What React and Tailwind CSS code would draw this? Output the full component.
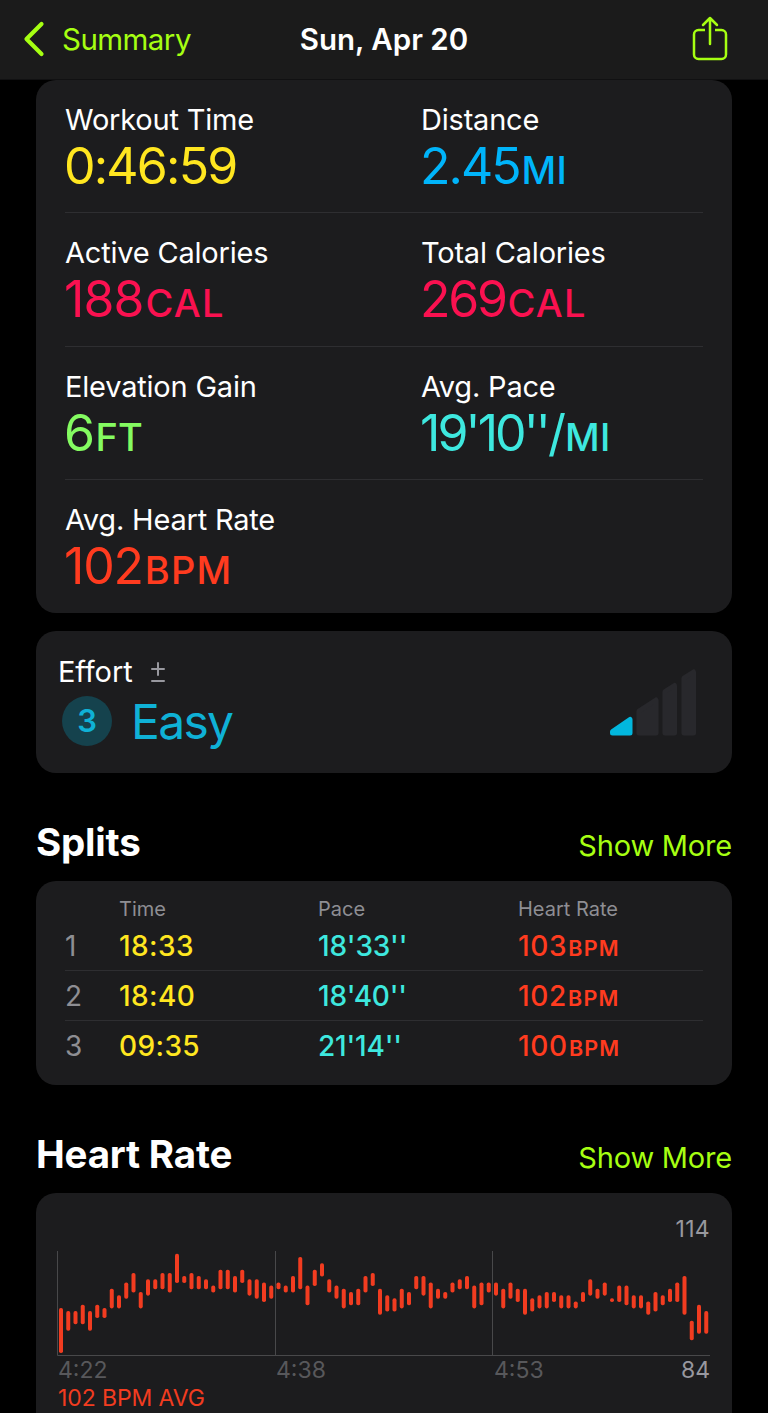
const metricRows = [
  [
    { label: "Workout Time", value: "0:46:59", unit: "", color: "text-[#ffe620]", spacing: "tracking-[-1.8px]" },
    { label: "Distance", value: "2.45", unit: "MI", color: "text-[#00b4fa]", spacing: "tracking-[-2px]", unitSpacing: "tracking-[0.2px]" },
  ],
  [
    { label: "Active Calories", value: "188", unit: "CAL", color: "text-[#fa1150]", spacing: "tracking-[-0.9px]", unitSpacing: "tracking-[1.2px]" },
    { label: "Total Calories", value: "269", unit: "CAL", color: "text-[#fa1150]", spacing: "tracking-[-2.3px]", unitSpacing: "tracking-[1.2px]" },
  ],
  [
    { label: "Elevation Gain", value: "6", unit: "FT", color: "text-[#84fb61]", spacing: "tracking-[-1.5px]", unitSpacing: "tracking-[0.2px]" },
    { label: "Avg. Pace", value: "19'10''/", unit: "MI", color: "text-[#3ee8df]", spacing: "tracking-[-2.9px]", unitSpacing: "tracking-[0.4px]" },
  ],
  [{ label: "Avg. Heart Rate", value: "102", unit: "BPM", color: "text-[#ff3b1f]", spacing: "tracking-[-1.2px]", unitSpacing: "tracking-[1.2px]" }],
];

const splits = [
  { id: 1, time: "18:33", pace: "18'33''", bpm: 103 },
  { id: 2, time: "18:40", pace: "18'40''", bpm: 102 },
  { id: 3, time: "09:35", pace: "21'14''", bpm: 100 },
];

// [high, low] of every sample, counted in bpm below the top of the chart
const samples = [
  [18, 32], [19, 25], [19, 23], [17, 23], [19, 25], [17, 21], [18, 21], [12, 18], [14, 18], [10, 15],
  [7, 13], [13, 18], [9, 14], [9, 12], [7, 12], [7, 13], [1, 10], [8, 10], [7, 12], [8, 12],
  [9, 12], [11, 13], [6, 12], [6, 12], [8, 13], [6, 10], [9, 14], [9, 15], [10, 16], [11, 15],
  [10, 12], [11, 13], [8, 13], [2, 12], [11, 17], [6, 11], [4, 8], [9, 13], [11, 15], [12, 18],
  [13, 17], [12, 17], [8, 13], [7, 11], [12, 20], [14, 19], [15, 19], [12, 18], [13, 17], [8, 12],
  [8, 14], [10, 18], [12, 15], [13, 15], [10, 13], [9, 12], [8, 12], [11, 18], [10, 17], [10, 13],
  [10, 14], [12, 18], [10, 15], [12, 16], [12, 20], [15, 19], [14, 18], [13, 18], [13, 16], [14, 18],
  [14, 18], [16, 18], [13, 16], [9, 14], [12, 15], [10, 14], [15, 16], [11, 16], [11, 17], [14, 18],
  [14, 18], [16, 20], [13, 19], [14, 17], [12, 16], [10, 16], [8, 20], [22, 28], [17, 26], [19, 26],
];

function Header() {
  return (
    <header className="grid h-20 grid-cols-[1fr_auto_1fr] items-center border-b border-[#111112] bg-[#1b1b1b] px-[23px] pb-px">
      <div className="flex items-center gap-[17px] text-[#a6ff12]">
        <svg width="22" height="36" viewBox="0 0 22 36" fill="none" stroke="currentColor" strokeWidth="4.2" strokeLinecap="round" strokeLinejoin="round">
          <path d="M18.500 3 3.500 18l15 15" />
        </svg>
        <span className="text-[29.5px] leading-9 tracking-[-0.55px]">Summary</span>
      </div>
      <h1 className="whitespace-nowrap text-center text-[29.5px] leading-9 font-semibold text-white">Sun, Apr 20</h1>
      <svg className="mr-[17px] justify-self-end text-[#a6ff12]" width="36" height="46" viewBox="0 0 36 46" fill="none" stroke="currentColor" strokeWidth="2.5" strokeLinecap="round" strokeLinejoin="round">
        <path d="M13 14H6.500a4.500 4.500 0 0 0-4.500 4.500v20A4.500 4.500 0 0 0 6.500 43h23a4.500 4.500 0 0 0 4.500-4.500v-20a4.500 4.500 0 0 0-4.500-4.500H23" strokeLinecap="butt" />
        <path d="M18 28V2.500M11 9l7-7 7 7" />
      </svg>
    </header>
  );
}

function Metric({ label, value, unit, color, spacing, unitSpacing }) {
  return (
    <div className="pt-[22px]">
      <p className="text-[29px] leading-9 tracking-[-0.2px] text-white">{label}</p>
      <p className={`-ml-px whitespace-nowrap text-[50px] leading-[57px] ${color}`}>
        <span className={spacing}>{value}</span>
        <span className={`ml-0.5 text-[38px] font-medium ${unitSpacing}`}>{unit}</span>
      </p>
    </div>
  );
}

function EffortCard() {
  return (
    <section className="mt-[18px] flex h-[142px] justify-between rounded-[20px] bg-[#1c1c1e] pl-[22px] pr-[35px]">
      <div className="pt-[23px]">
        <div className="flex items-center gap-[17px]">
          <span className="text-[29px] leading-9 tracking-[-0.1px] text-white">Effort</span>
          <svg width="16" height="22" viewBox="0 0 16 22" stroke="#98989f" strokeWidth="2" strokeLinecap="round">
            <path d="M2 8h12M8 2v12M2 20h12" />
          </svg>
        </div>
        <div className="flex items-center gap-[19px] pl-1 pt-px">
          <span className="flex size-[50px] items-center justify-center rounded-full bg-[#15424d] text-[31px] font-semibold text-[#0fb1d6]">3</span>
          <span className="pt-0.5 text-[48px] leading-[58px] tracking-[-1.7px] text-[#0fb1d6]">Easy</span>
        </div>
      </div>
      <svg className="mt-[37px]" width="88" height="70" viewBox="0 0 88 70" strokeWidth="5" strokeLinejoin="round">
        <path d="M3.500 65v-1.500L21 51.500V65Z" fill="#02b7de" stroke="#02b7de" />
        <g fill="#28282c" stroke="#28282c">
          <path d="M30 65V43L47 32v33Z" />
          <path d="M56 65V23.500L65.500 17.500V65Z" />
          <path d="M75 65V10L84.500 4v61Z" />
        </g>
      </svg>
    </section>
  );
}

function SectionTitle({ children }) {
  return (
    <div className="flex items-center justify-between">
      <h2 className="text-[38.5px] leading-[48px] font-bold tracking-[-0.2px] text-white">{children}</h2>
      <span className="pt-[7px] text-[29px] leading-9 tracking-[-0.2px] text-[#a6ff12]">Show More</span>
    </div>
  );
}

function SplitsCard() {
  return (
    <section className="mt-[15px] h-[204px] rounded-[20px] bg-[#1c1c1e] px-[29px] pt-[13px]">
      <div className="grid h-[27px] grid-cols-[54px_199px_200px_1fr] items-center pb-[5px] text-[20px] text-[#8e8e93]">
        <span />
        <span>Time</span>
        <span>Pace</span>
        <span>Heart Rate</span>
      </div>
      {splits.map((s) => (
        <div key={s.id} className="grid h-[50px] grid-cols-[54px_199px_200px_1fr] items-center border-b border-[#2e2e31] text-[28px] font-medium last:border-0">
          <span className="font-normal text-[#8e8e93]">{s.id}</span>
          <span className="tracking-[0.4px] text-[#ffe620]">{s.time}</span>
          <span className="tracking-[-0.2px] text-[#3ee8df]">{s.pace}</span>
          <span className="tracking-[0.7px] text-[#ff3b1f]">
            {s.bpm}
            <span className="ml-px text-[21.5px] font-semibold tracking-[1.2px]">BPM</span>
          </span>
        </div>
      ))}
    </section>
  );
}

function HeartRateCard() {
  return (
    <section className="mt-[15px] h-[240px] rounded-[20px] bg-[#1c1c1e] pl-[21px] pr-[21px] pt-[20px] text-[23px] leading-8">
      <p className="pr-px text-right tracking-[0.3px] text-[#98989f]">114</p>
      <svg className="mt-[5px] block" width="654" height="106" viewBox="0 0 654 106">
        <path d="M.5 1v104.500H653M218.500 1v104M435.500 1v104" fill="none" stroke="#48484a" />
        {samples.map(([high, low], i) => (
          <rect key={i} x={2 + i * 7.25} y={0.6 + high * 3.183} width="4" height={(low - high) * 3.183 + 0.5} rx="1.8" fill="#f23c20" />
        ))}
      </svg>
      <div className="flex h-[28px] items-center pl-px pr-px text-[#58585b]">
        <span className="w-[218px]">4:22</span>
        <span className="w-[218px]">4:38</span>
        <span>4:53</span>
        <span className="ml-auto text-[#98989f]">84</span>
      </div>
      <p className="pl-px leading-7 tracking-[-0.1px] text-[#f23c20]">102 BPM AVG</p>
    </section>
  );
}

export default function App() {
  return (
    <div className="h-[1413px] w-[768px] overflow-hidden bg-black font-['Inter',sans-serif]">
      <Header />
      <main className="px-9">
        <section className="h-[533px] rounded-[20px] bg-[#1c1c1e] px-[29px]">
          {metricRows.map((row, i) => (
            <div key={i} className="grid h-[133.3px] grid-cols-[356px_1fr] border-b border-[#2e2e31] last:border-0">
              {row.map((m) => (
                <Metric key={m.label} {...m} />
              ))}
            </div>
          ))}
        </section>
        <EffortCard />
        <div className="mt-[45px]">
          <SectionTitle>Splits</SectionTitle>
          <SplitsCard />
        </div>
        <div className="mt-[45px]">
          <SectionTitle>Heart Rate</SectionTitle>
          <HeartRateCard />
        </div>
      </main>
    </div>
  );
}
